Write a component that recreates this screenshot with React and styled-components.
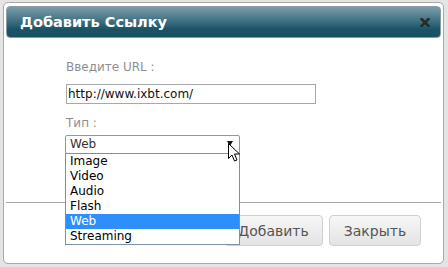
import React from 'react';
import styled, { createGlobalStyle } from 'styled-components';

const Global = createGlobalStyle`
  html, body {
    margin: 0;
    padding: 0;
    background: #e4e4e4;
  }
  body {
    width: 448px;
    height: 267px;
    overflow: hidden;
    font-family: "DejaVu Sans", Verdana, sans-serif;
  }
`;

const Page = styled.div`
  padding: 2px 4px 0 3px;
`;

const Dialog = styled.div`
  width: 441px;
  height: 262px;
  box-sizing: border-box;
  background: #fff;
  border: 1px solid #a9a9a9;
  border-radius: 5px;
  padding: 3px 2px 0 2px;
  display: flex;
  flex-direction: column;
`;

const Header = styled.div`
  height: 32px;
  flex-shrink: 0;
  box-sizing: border-box;
  border: 1px solid #8a9ca3;
  border-radius: 4px;
  background: linear-gradient(to bottom, #7c9ea9 0%, #3f7384 45%, #1b5266 75%, #1a5064 100%);
  display: flex;
  align-items: center;
  justify-content: space-between;
  padding: 0 10px 0 13px;
`;

const Title = styled.span`
  font-weight: bold;
  font-size: 14.5px;
  color: #fff;
`;

const Close = styled.svg`
  width: 10px;
  height: 9px;
  margin-top: 1px;
`;

const Body = styled.div`
  padding: 20px 0 0 60px;
  height: 164px;
  flex-shrink: 0;
  box-sizing: border-box;
  display: flex;
  flex-direction: column;
`;

const Label = styled.div`
  font-size: 12px;
  color: #8f8f8f;
  height: 18px;
  line-height: 18px;
`;

const TextInput = styled.div`
  margin: 8px 0 10px;
  width: 250px;
  height: 20px;
  box-sizing: border-box;
  border: 1px solid #a8a8a8;
  font-size: 12px;
  line-height: 18px;
  padding-left: 1px;
  color: #111;
`;

const SelectWrap = styled.div`
  position: relative;
  margin: 3px 0 0 -1px;
  width: 175px;
`;

const Select = styled.div`
  height: 19px;
  box-sizing: border-box;
  border: 1px solid #7a9ccc;
  border-radius: 2px;
  font-size: 12px;
  line-height: 17px;
  padding-left: 4px;
  color: #333;
  display: flex;
  justify-content: space-between;
  align-items: center;
`;

const Arrow = styled.span`
  width: 0;
  height: 0;
  border-left: 3px solid transparent;
  border-right: 3px solid transparent;
  border-top: 5px solid #111;
  margin: 0 6px 2px 0;
`;

const List = styled.div`
  position: absolute;
  top: 18px;
  left: 0;
  width: 175px;
  box-sizing: border-box;
  border: 1px solid #7f8fa6;
  background: #fff;
  z-index: 2;
`;

const Option = styled.div`
  height: 15px;
  line-height: 15px;
  font-size: 12px;
  padding-left: 4px;
  color: ${p => (p.$active ? '#fff' : '#000')};
  background: ${p => (p.$active ? '#2f8ffa' : 'transparent')};
`;

const Cursor = styled.svg`
  position: absolute;
  left: 163px;
  top: 8px;
  width: 12px;
  height: 19px;
  z-index: 3;
`;

const Divider = styled.div`
  height: 1px;
  flex-shrink: 0;
  background: #a8a8a8;
`;

const Footer = styled.div`
  display: flex;
  justify-content: flex-end;
  gap: 6px;
  padding: 12px 20px 0 0;
`;

const Button = styled.div`
  height: 31px;
  box-sizing: border-box;
  width: ${p => p.$w}px;
  border: 1px solid #d0d0d0;
  border-radius: 4px;
  background: linear-gradient(to bottom, #f7f7f7 0%, #ececec 55%, #e3e3e3 100%);
  color: #555;
  font-size: 14px;
  display: flex;
  align-items: center;
  justify-content: center;
`;

const options = ['Image', 'Video', 'Audio', 'Flash', 'Web', 'Streaming'];

export default function App() {
  return (
    <>
      <Global />
      <Page>
        <Dialog>
          <Header>
            <Title>Добавить Ссылку</Title>
            <Close viewBox="0 0 10 9">
              <path d="M1.5 1 L8.5 8 M8.5 1 L1.5 8" stroke="#2a2a2a" strokeWidth="2.6" strokeLinecap="square" />
            </Close>
          </Header>
          <Body>
            <Label>Введите URL :</Label>
            <TextInput>http://www.ixbt.com/</TextInput>
            <Label>Тип :</Label>
            <SelectWrap>
              <Select>
                Web
                <Arrow />
              </Select>
              <List>
                {options.map(o => (
                  <Option key={o} $active={o === 'Web'}>{o}</Option>
                ))}
              </List>
              <Cursor viewBox="0 0 12 19">
                <path d="M0.5 0.5 L0.5 15.5 L4 12 L6.5 18 L9 17 L6.5 11 L11.5 11 Z" fill="#fff" stroke="#000" strokeWidth="1" strokeLinejoin="miter" />
              </Cursor>
            </SelectWrap>
          </Body>
          <Divider />
          <Footer>
            <Button $w={99}>Добавить</Button>
            <Button $w={92}>Закрыть</Button>
          </Footer>
        </Dialog>
      </Page>
    </>
  );
}
